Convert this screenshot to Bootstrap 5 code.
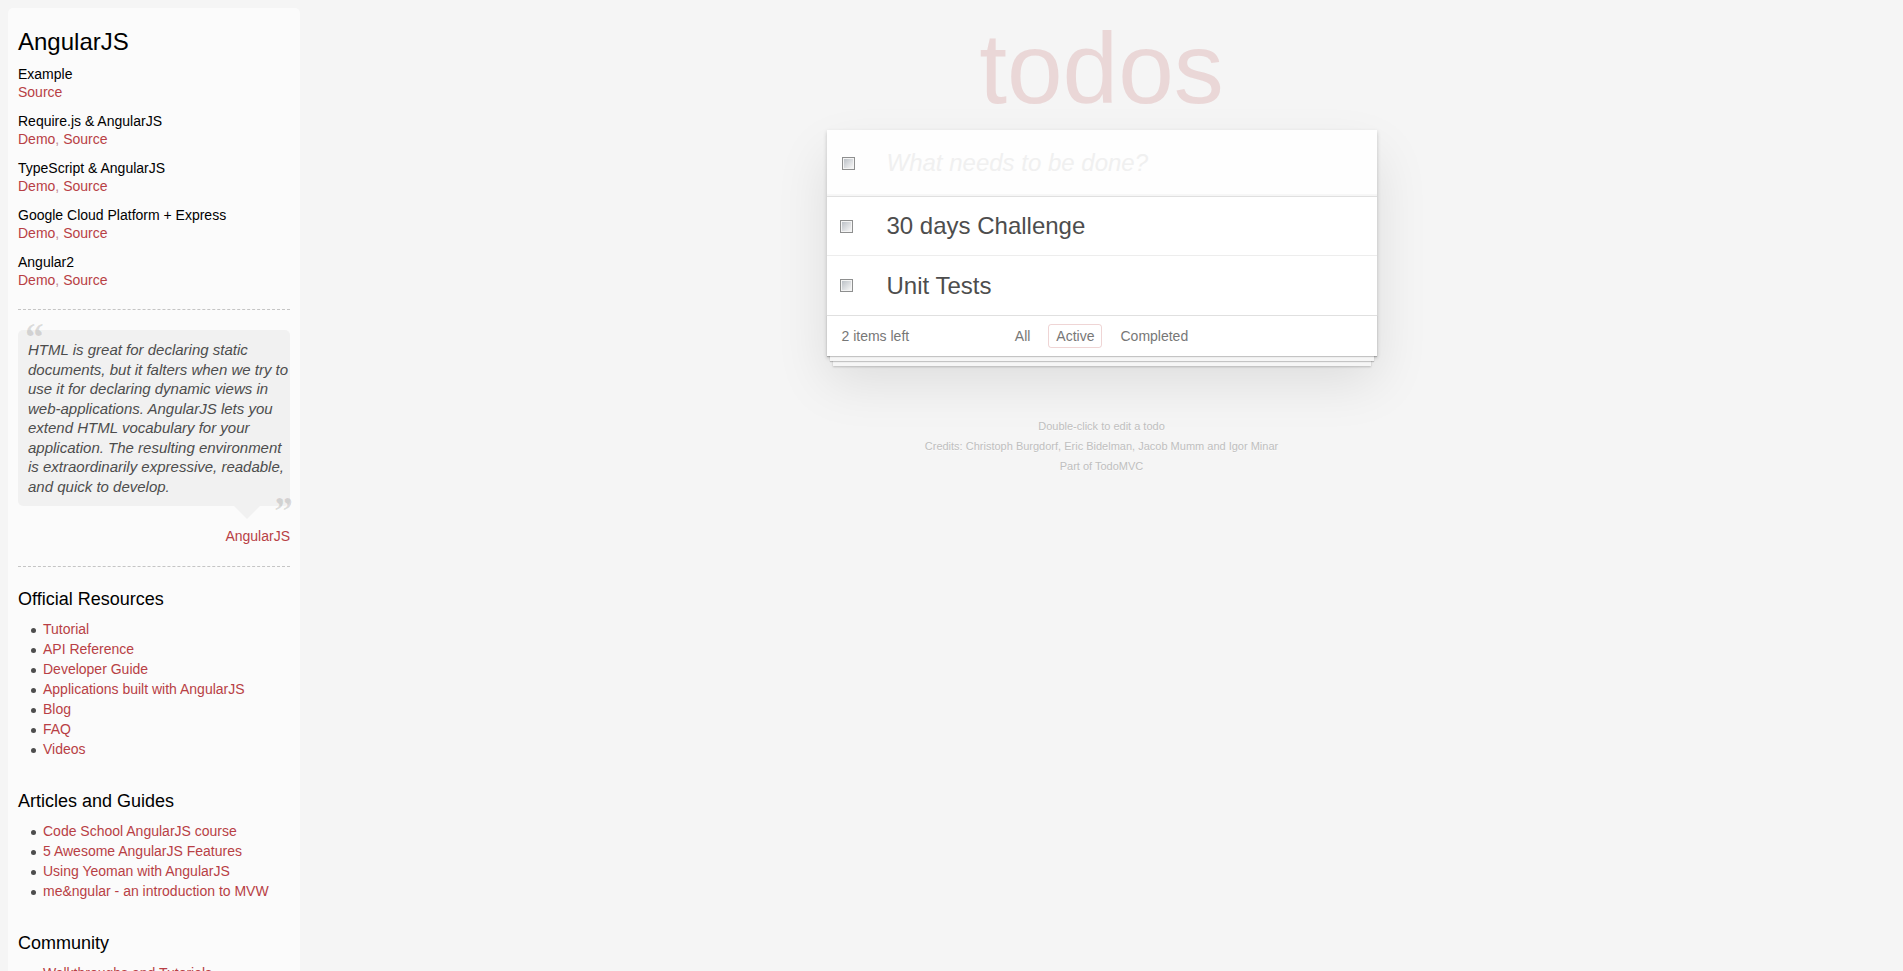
<!DOCTYPE html>
<html lang="en">
<head>
<meta charset="utf-8">
<meta name="viewport" content="width=device-width, initial-scale=1">
<title>AngularJS • TodoMVC</title>
<link href="https://cdn.jsdelivr.net/npm/bootstrap@5.3.0/dist/css/bootstrap.min.css" rel="stylesheet">
<style>
body { background: #f5f5f5; color: #4d4d4d; font-family: "Liberation Sans", Arial, sans-serif; font-size: 14px; line-height: 20px; height: 100vh; overflow: hidden; }
a { color: #b83f45; text-decoration: none; }
a:hover { text-decoration: underline; }

/* sidebar */
.learn { width: 292px; margin: 8px 0 0 8px; padding: 10px; background: rgba(255,255,255,.6); border-radius: 5px 5px 0 0; overflow-y: auto; scrollbar-width: none; color: #4d4d4d; }
.learn h3, .learn h4, .learn h5 { color: #000; font-weight: 400; margin: 0; }
.learn h3 { font-size: 24px; line-height: 28px; margin: 10px 0 9px; }
.learn h4 { font-size: 18px; line-height: 24px; margin-bottom: 8px; }
.learn h5 { font-size: 14px; line-height: 18px; }
.demo-links { line-height: 18px; margin-bottom: 11px; color: #c08a8d; }
.dash-rule { border: 0; border-top: 1px dashed #c5c5c5; opacity: 1; margin: 20px 0; height: 0; }
.speech { position: relative; background: rgba(0,0,0,.04); border-radius: 5px; padding: 10px 0 10px 10px; font-size: 15px; font-style: italic; line-height: 1.3; white-space: nowrap; }
.speech p { margin: 0; }
.speech::before, .speech::after { position: absolute; font: italic 700 40px/50px "Liberation Serif", Georgia, serif; color: rgba(0,0,0,.12); }
.speech::before { content: "\201C"; top: -17px; left: 5px; }
.speech::after { content: "\201D"; right: -2px; bottom: -30px; }
.speech-tail { position: absolute; right: 30px; top: 100%; border: 13px solid transparent; border-bottom-width: 0; border-top-color: rgba(0,0,0,.04); }
.speech-by { margin-top: 20px; }
.link-list { padding-left: 25px; margin-bottom: 30px; list-style: none; }
.link-list li { position: relative; }
.link-list li::before { content: ""; position: absolute; left: -12px; top: 9px; width: 5px; height: 5px; border-radius: 50%; background: #4d4d4d; }

/* todo application */
.todo-col { max-width: 550px; width: 100%; }
.app-title { font-size: 100px; line-height: 112px; color: rgba(175,47,47,.15); font-weight: 400; margin: 12px 0 6px; }
.todo-card { background: #fff; box-shadow: 0 2px 4px 0 rgba(0,0,0,.2), 0 25px 50px 0 rgba(0,0,0,.1); }
.new-row { height: 66px; padding-left: 15px; gap: 32px; background: rgba(0,0,0,.003); box-shadow: inset 0 -2px 1px rgba(0,0,0,.03); }
.new-todo { font-size: 24px; line-height: 28px; color: #4d4d4d; padding: 0; border: 0; outline: 0; background: transparent; }
.new-todo::placeholder { font-style: italic; color: #f0f0f0; opacity: 1; }
.todo-rows { border-top: 1px solid #e0e0e0; }
.todo-row { height: 59px; padding-left: 13px; gap: 34px; border-bottom: 1px solid #ededed; font-size: 24px; line-height: 28px; }
.todo-row:last-child { border-bottom: 0; }
.tick { appearance: none; flex: none; width: 13px; height: 13px; margin: 0; padding: 1px; border: 1px solid #8e8f8f; background: linear-gradient(135deg, #bcc1c7, #f6f6f6) content-box, #f4f4f4 padding-box; }
.tick:checked { background: #4d4d4d content-box, #f4f4f4 padding-box; }
.todo-foot { position: relative; height: 41px; padding: 0 15px; border-top: 1px solid #e0e0e0; color: #777; box-shadow: 0 1px 1px rgba(0,0,0,.2), 0 8px 0 -3px #f6f6f6, 0 9px 1px -3px rgba(0,0,0,.2), 0 16px 0 -6px #f6f6f6, 0 17px 2px -6px rgba(0,0,0,.2); }
.filters { position: absolute; inset: 0; gap: 4px; }
.filters a { color: inherit; padding: 1px 7px; margin: 0 3px; border: 1px solid transparent; border-radius: 3px; }
.filters a.selected { border-color: rgba(175,47,47,.2); }
.info { margin-top: 60px; color: #bfbfbf; font-size: 11px; line-height: 20px; text-shadow: 0 1px 0 rgba(255,255,255,.5); }
.info p { margin: 0; }
.info a { color: inherit; }
</style>
</head>
<body>
<div class="d-flex h-100">
  <aside class="learn flex-shrink-0">
    <h3>AngularJS</h3>
    <h5>Example</h5>
    <div class="demo-links"><a href="#">Source</a></div>
    <h5>Require.js &amp; AngularJS</h5>
    <div class="demo-links"><a href="#">Demo</a>, <a href="#">Source</a></div>
    <h5>TypeScript &amp; AngularJS</h5>
    <div class="demo-links"><a href="#">Demo</a>, <a href="#">Source</a></div>
    <h5>Google Cloud Platform + Express</h5>
    <div class="demo-links"><a href="#">Demo</a>, <a href="#">Source</a></div>
    <h5>Angular2</h5>
    <div class="demo-links"><a href="#">Demo</a>, <a href="#">Source</a></div>
    <hr class="dash-rule">
    <blockquote class="speech mb-0">
      <p>HTML is great for declaring static<br>documents, but it falters when we try to<br>use it for declaring dynamic views in<br>web-applications. AngularJS lets you<br>extend HTML vocabulary for your<br>application. The resulting environment<br>is extraordinarily expressive, readable,<br>and quick to develop.</p>
      <span class="speech-tail"></span>
    </blockquote>
    <div class="speech-by text-end"><a href="#">AngularJS</a></div>
    <hr class="dash-rule">
    <h4>Official Resources</h4>
    <ul class="link-list">
      <li><a href="#">Tutorial</a></li>
      <li><a href="#">API Reference</a></li>
      <li><a href="#">Developer Guide</a></li>
      <li><a href="#">Applications built with AngularJS</a></li>
      <li><a href="#">Blog</a></li>
      <li><a href="#">FAQ</a></li>
      <li><a href="#">Videos</a></li>
    </ul>
    <h4>Articles and Guides</h4>
    <ul class="link-list">
      <li><a href="#">Code School AngularJS course</a></li>
      <li><a href="#">5 Awesome AngularJS Features</a></li>
      <li><a href="#">Using Yeoman with AngularJS</a></li>
      <li><a href="#">me&amp;ngular - an introduction to MVW</a></li>
    </ul>
    <h4>Community</h4>
    <ul class="link-list">
      <li><a href="#">Walkthroughs and Tutorials</a></li>
    </ul>
  </aside>

  <div class="flex-grow-1 d-flex justify-content-center">
    <main class="todo-col">
      <h1 class="app-title text-center">todos</h1>
      <section class="todo-card">
        <form class="new-row d-flex align-items-center">
          <input class="tick" type="checkbox" aria-label="Mark all as complete">
          <input class="new-todo flex-grow-1" type="text" placeholder="What needs to be done?" aria-label="New todo">
        </form>
        <ul class="todo-rows list-unstyled mb-0">
          <li class="todo-row d-flex align-items-center"><input class="tick" type="checkbox" id="todo1"><label for="todo1">30 days Challenge</label></li>
          <li class="todo-row d-flex align-items-center"><input class="tick" type="checkbox" id="todo2"><label for="todo2">Unit Tests</label></li>
        </ul>
        <footer class="todo-foot d-flex align-items-center">
          <span>2 items left</span>
          <nav class="filters d-flex justify-content-center align-items-center">
            <a href="#">All</a>
            <a href="#" class="selected">Active</a>
            <a href="#">Completed</a>
          </nav>
        </footer>
      </section>
      <div class="info text-center">
        <p>Double-click to edit a todo</p>
        <p>Credits: <a href="#">Christoph Burgdorf</a>, <a href="#">Eric Bidelman</a>, <a href="#">Jacob Mumm</a> and <a href="#">Igor Minar</a></p>
        <p>Part of <a href="#">TodoMVC</a></p>
      </div>
    </main>
  </div>
</div>
<script src="https://cdn.jsdelivr.net/npm/bootstrap@5.3.0/dist/js/bootstrap.bundle.min.js"></script>
</body>
</html>
